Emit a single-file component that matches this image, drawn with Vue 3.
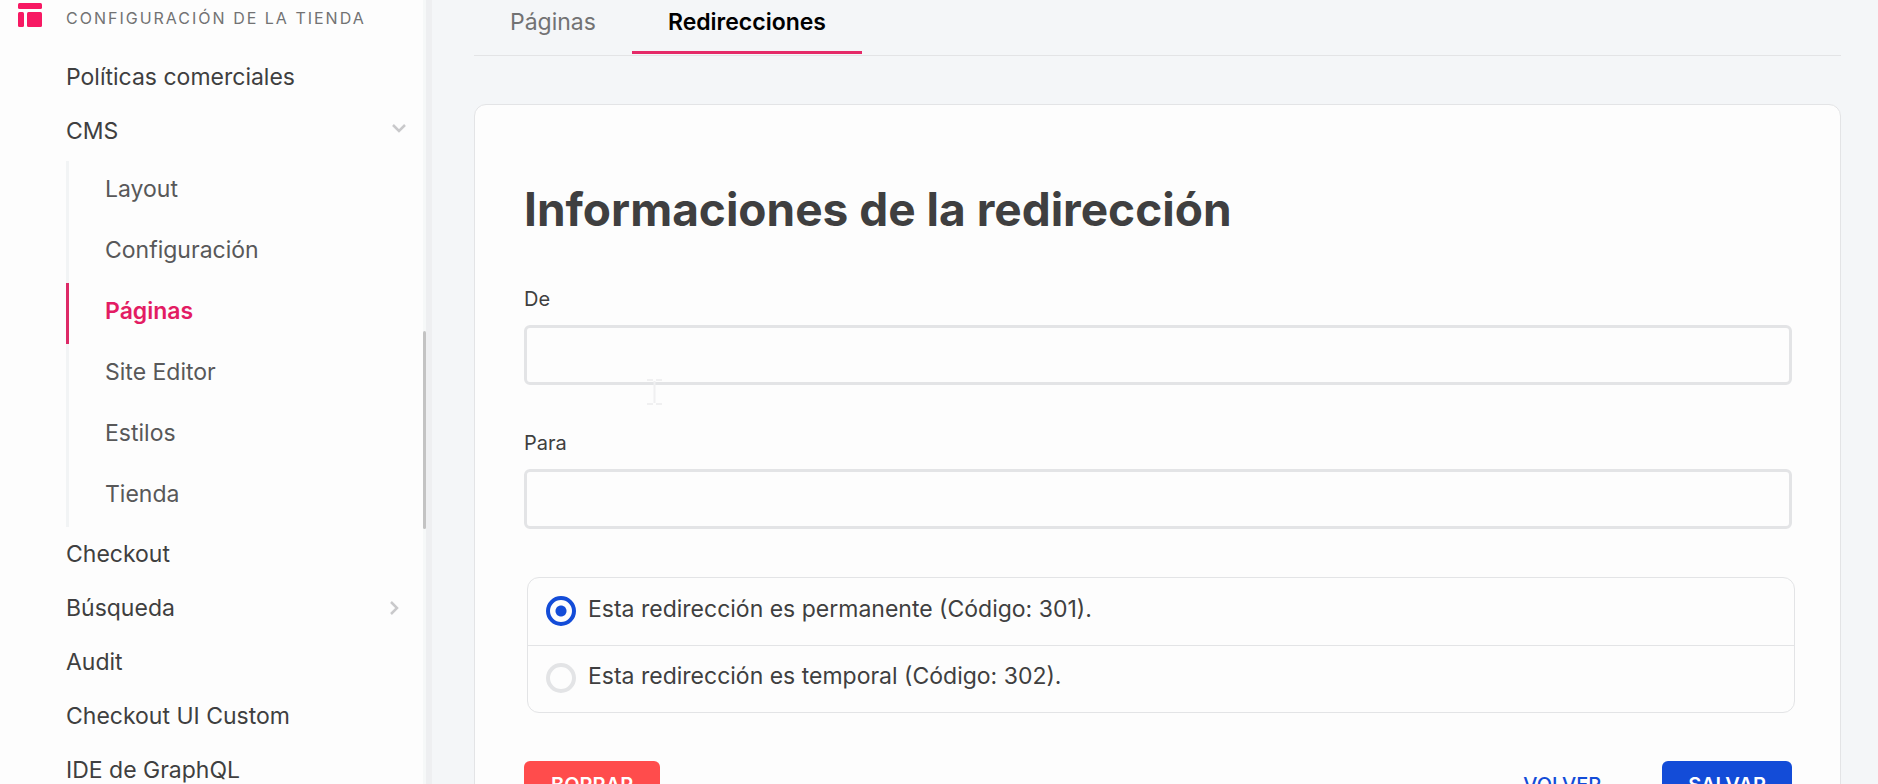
<script setup>
import { ref } from 'vue'

const pages = ['Layout', 'Configuración', 'Páginas', 'Site Editor', 'Estilos', 'Tienda']
const items = [
  { label: 'Checkout' },
  { label: 'Búsqueda', more: true },
  { label: 'Audit' },
  { label: 'Checkout UI Custom' },
  { label: 'IDE de GraphQL' }
]
const from = ref('')
const to = ref('')
const kind = ref('301')
</script>

<template>
  <div class="app">
    <aside class="sidebar">
      <nav class="nav" aria-label="Configuración de la tienda">
        <h2 class="section">
          <svg class="logo" viewBox="0 0 24 24" aria-hidden="true">
            <rect x="0" y="0" width="24" height="6" rx="1.5" />
            <rect x="0" y="9" width="6" height="15" rx="1.5" />
            <rect x="9" y="9" width="15" height="15" rx="1.5" />
          </svg>
          <span>CONFIGURACIÓN DE LA TIENDA</span>
        </h2>
        <a class="item" href="#">Políticas comerciales</a>
        <a class="item open" href="#">
          CMS
          <svg class="chevron down" viewBox="0 0 16 10" aria-hidden="true"><path d="M2 2l6 6 6-6" /></svg>
        </a>
        <ul class="sub">
          <li v-for="p in pages" :key="p">
            <a href="#" :class="{ active: p === 'Páginas' }">{{ p }}</a>
          </li>
        </ul>
        <a v-for="i in items" :key="i.label" class="item" href="#">
          {{ i.label }}
          <svg v-if="i.more" class="chevron right" viewBox="0 0 10 16" aria-hidden="true"><path d="M2 2l6 6-6 6" /></svg>
        </a>
      </nav>
      <div class="track"><div class="thumb"></div></div>
    </aside>

    <main class="main">
      <div class="tabs" role="tablist">
        <button class="tab" type="button" role="tab" aria-selected="false">Páginas</button>
        <button class="tab current" type="button" role="tab" aria-selected="true">Redirecciones</button>
      </div>

      <form class="card" @submit.prevent>
        <h1>Informaciones de la redirección</h1>
        <div class="field">
          <label for="from">De</label>
          <input id="from" v-model="from" type="text" />
          <svg class="ibeam" viewBox="0 0 15 26" aria-hidden="true">
            <path d="M0 1h6M9 1h6M7.500 2v22M0 25h6M9 25h6" />
          </svg>
        </div>
        <div class="field">
          <label for="to">Para</label>
          <input id="to" v-model="to" type="text" />
        </div>
        <div class="choices" role="radiogroup" aria-label="Tipo de redirección">
          <label class="choice">
            <input v-model="kind" type="radio" name="kind" value="301" />
            <span>Esta redirección es permanente (Código: 301).</span>
          </label>
          <label class="choice">
            <input v-model="kind" type="radio" name="kind" value="302" />
            <span>Esta redirección es temporal (Código: 302).</span>
          </label>
        </div>
        <div class="actions">
          <button class="btn danger" type="button">BORRAR</button>
          <button class="btn plain" type="button">VOLVER</button>
          <button class="btn primary" type="submit">SALVAR</button>
        </div>
      </form>
    </main>
  </div>
</template>

<style>
body {
  overflow: hidden;
}
</style>

<style scoped>
.app,
.app * {
  box-sizing: border-box;
}
.app {
  display: flex;
  height: 100vh;
  overflow: hidden;
  background: #f4f6f8;
  color: #3f3f40;
  font-family: Inter, "Noto Sans", sans-serif;
  font-size: 23px;
}
a {
  color: inherit;
  text-decoration: none;
}
button,
input {
  font: inherit;
}
.sidebar {
  position: relative;
  flex: none;
  width: 432px;
  height: 100vh;
  overflow: hidden;
  background: #fdfdfd;
  border-right: 6px solid #eeeff1;
}
.track {
  position: absolute;
  right: 0;
  top: 0;
  width: 3px;
  height: 100%;
  background: #f6f8f8;
}
.thumb {
  height: 198px;
  margin-top: 331px;
  border-radius: 2px;
  background: #c3c3c3;
}
.section {
  display: flex;
  align-items: center;
  gap: 24px;
  height: 36px;
  margin: 0 0 14px;
  padding-left: 18px;
  color: #727273;
  font-size: 16px;
  font-weight: 400;
  letter-spacing: 2px;
  white-space: nowrap;
}
.logo {
  width: 24px;
  height: 24px;
  margin-bottom: 6px;
  fill: #f71963;
}
.item {
  display: flex;
  align-items: center;
  justify-content: space-between;
  height: 54px;
  padding: 0 27px 0 66px;
}
.item.open {
  padding-right: 19px;
}
.chevron {
  fill: none;
  stroke: #c9c9cb;
  stroke-width: 2.5;
}
.down {
  width: 16px;
  height: 10px;
  margin-bottom: 6px;
}
.right {
  width: 10px;
  height: 16px;
}
.sub {
  margin: 3px 0 0 66px;
  padding: 0;
  list-style: none;
}
.sub a {
  display: flex;
  align-items: center;
  height: 61px;
  padding: 0 0 6px 36px;
  border-left: 3px solid #f2f4f5;
  color: #585859;
}
.sub a.active {
  border-color: #dd2a67;
  color: #e31c63;
  font-weight: 600;
}
.main {
  flex: 1;
  min-width: 0;
  padding: 0 37px 0 42px;
}
.tabs {
  display: flex;
  height: 56px;
  border-bottom: 1px solid #e3e4e6;
}
.tab {
  height: 54px;
  padding: 0 36px 8px;
  border: 0;
  border-bottom: 3px solid transparent;
  background: none;
  color: #727273;
}
.tab.current {
  border-color: #e52a68;
  color: #000;
  font-weight: 600;
}
.card {
  margin-top: 48px;
  padding: 76px 48px 48px 49px;
  border: 1px solid #e3e4e6;
  border-radius: 12px;
  background: #fdfdfd;
}
h1 {
  margin: 0 0 50px;
  font-size: 46px;
  line-height: 56px;
  font-weight: 700;
}
.field {
  position: relative;
  margin-bottom: 48px;
}
.field label {
  display: block;
  margin-bottom: 14px;
  font-size: 20px;
  line-height: 24px;
}
.field + .field {
  margin-top: 46px;
}
.field:has(+ .field) {
  margin-bottom: 0;
}
.field input {
  display: block;
  width: 100%;
  height: 60px;
  padding: 0 20px;
  border: 3px solid #e3e4e6;
  border-radius: 6px;
  outline: none;
  background: #fdfdfd;
}
.ibeam {
  position: absolute;
  left: 123px;
  bottom: -20px;
  width: 15px;
  height: 26px;
  fill: none;
  stroke: #f0f0f1;
  stroke-width: 2;
}
.choices {
  margin: 0 -3px 48px 3px;
  border: 1px solid #e3e4e6;
  border-radius: 12px;
}
.choice {
  display: flex;
  align-items: center;
  gap: 12px;
  height: 67px;
  padding: 0 18px 2px;
}
.choice + .choice {
  border-top: 1px solid #e3e4e6;
}
.choice span {
  padding-bottom: 4px;
}
.choice input {
  flex: none;
  appearance: none;
  width: 30px;
  height: 30px;
  margin: 0;
  border: 4px solid #e3e4e6;
  border-radius: 50%;
  background: #fdfdfd;
}
.choice input:checked {
  border-color: #134cd8;
  background: radial-gradient(circle, #134cd8 5px, #fdfdfd 6px);
}
.actions {
  display: flex;
  align-items: center;
}
.btn {
  height: 47px;
  padding: 0 27px;
  border: 0;
  border-radius: 6px;
  font-size: 20px;
  font-weight: 600;
}
.danger {
  margin-right: auto;
  background: #ff4c4c;
  color: #fff;
}
.plain {
  margin-right: 34px;
  background: none;
  color: #134cd8;
  font-weight: 500;
}
.primary {
  padding: 0 26px;
  background: #134cd8;
  color: #fff;
}
</style>
